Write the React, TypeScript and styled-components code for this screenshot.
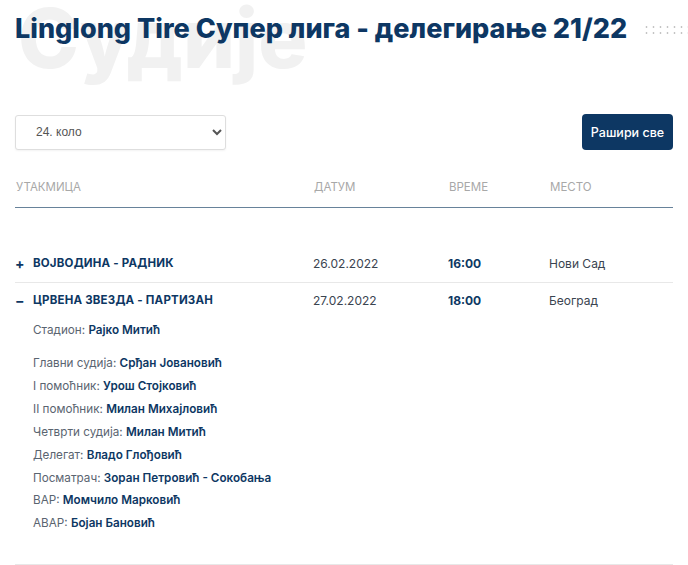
import React from 'react';
import styled, { createGlobalStyle } from 'styled-components';

const navy = '#0d3763';

const GlobalStyle = createGlobalStyle`
  body {
    margin: 0;
    background: #fff;
    font-family: Inter, 'Noto Sans', sans-serif;
  }
`;

type Match = {
  teams: string;
  date: string;
  time: string;
  place: string;
  open?: boolean;
  stadium?: string;
  officials?: [string, string][];
};

const matches: Match[] = [
  { teams: 'Војводина - Радник', date: '26.02.2022', time: '16:00', place: 'Нови Сад' },
  {
    teams: 'Црвена звезда - Партизан',
    date: '27.02.2022',
    time: '18:00',
    place: 'Београд',
    open: true,
    stadium: 'Рајко Митић',
    officials: [
      ['Главни судија', 'Срђан Јовановић'],
      ['I помоћник', 'Урош Стојковић'],
      ['II помоћник', 'Милан Михајловић'],
      ['Четврти судија', 'Милан Митић'],
      ['Делегат', 'Владо Глођовић'],
      ['Посматрач', 'Зоран Петровић - Сокобања'],
      ['ВАР', 'Момчило Марковић'],
      ['АВАР', 'Бојан Бановић'],
    ],
  },
];

const App: React.FC = () => {
  return (
    <Page>
      <GlobalStyle />
      <Header>
        <Watermark>Судије</Watermark>
        <Title>Linglong Tire Супер лига - делегирање 21/22</Title>
        <Dots />
      </Header>
      <Controls>
        <Select defaultValue="24">
          <option value="24">24. коло</option>
        </Select>
        <ExpandButton>Рашири све</ExpandButton>
      </Controls>
      <HeadRow>
        <HeadCell>Утакмица</HeadCell>
        <HeadCell>Датум</HeadCell>
        <HeadCell>Време</HeadCell>
        <HeadCell>Место</HeadCell>
      </HeadRow>
      <Body>
        {matches.map((m) => (
          <MatchBlock key={m.teams} $open={m.open}>
            <MatchRow>
              <Teams>
                <Toggle>{m.open ? '−' : '+'}</Toggle>
                {m.teams}
              </Teams>
              <Cell>{m.date}</Cell>
              <Time>{m.time}</Time>
              <Cell>{m.place}</Cell>
            </MatchRow>
            {m.open && (
              <Details>
                <Stadium>
                  Стадион: <b>{m.stadium}</b>
                </Stadium>
                {m.officials?.map(([role, name]) => (
                  <Official key={role}>
                    {role}: <b>{name}</b>
                  </Official>
                ))}
              </Details>
            )}
          </MatchBlock>
        ))}
      </Body>
    </Page>
  );
};

const Page = styled.div`
  width: 688px;
  padding: 0 15px;
  box-sizing: border-box;
  overflow: hidden;
`;

const Header = styled.div`
  position: relative;
  display: flex;
  align-items: center;
  height: 56px;
  margin-bottom: 58px;
`;

const Watermark = styled.div`
  position: absolute;
  left: 3px;
  top: -11px;
  font-size: 82px;
  font-weight: 800;
  color: #f1f1f1;
  white-space: nowrap;
  z-index: 0;
`;

const Title = styled.h1`
  position: relative;
  z-index: 1;
  margin: 0;
  font-size: 27px;
  font-weight: 800;
  color: ${navy};
  white-space: nowrap;
`;

const Dots = styled.span`
  position: relative;
  z-index: 1;
  flex: 1;
  height: 12px;
  margin: 4px -15px 0 16px;
  background-image: radial-gradient(circle, #c4c4c4 0.8px, transparent 1.2px);
  background-size: 7px 6px;
`;

const Controls = styled.div`
  display: flex;
  justify-content: space-between;
  align-items: center;
`;

const Select = styled.select`
  width: 211px;
  height: 35px;
  padding: 0 14px 0 16px;
  border: 1px solid #dedede;
  border-radius: 3px;
  background: #fff;
  box-shadow: 0 1px 2px rgba(0, 0, 0, 0.05);
  font-family: 'Liberation Sans', Arial, sans-serif;
  font-size: 12px;
  color: #555;
`;

const ExpandButton = styled.button`
  width: 91px;
  height: 36px;
  border: none;
  border-radius: 4px;
  background: ${navy};
  color: #fff;
  font-family: Inter, sans-serif;
  font-size: 12.5px;
  font-weight: 500;
`;

const grid = `
  display: grid;
  grid-template-columns: 298px 135px 101px 1fr;
  align-items: center;
`;

const HeadRow = styled.div`
  ${grid};
  padding: 30px 0 13px;
  line-height: 14px;
  border-bottom: 1.5px solid #67829a;
`;

const HeadCell = styled.div`
  font-size: 11.5px;
  color: #a8a8a8;
  text-transform: uppercase;
  padding-left: 1px;
`;

const Body = styled.div`
  padding-top: 38px;
`;

const MatchBlock = styled.div<{ $open?: boolean }>`
  border-bottom: 1px solid #e8e8e8;
  padding-bottom: ${(p) => (p.$open ? '29px' : '0')};
`;

const MatchRow = styled.div`
  ${grid};
  height: 36px;
  padding-bottom: 2px;
  box-sizing: border-box;
`;

const Teams = styled.div`
  display: flex;
  align-items: center;
  font-size: 11.5px;
  font-weight: 700;
  color: ${navy};
  text-transform: uppercase;
  letter-spacing: 0.2px;
`;

const Toggle = styled.span`
  width: 18px;
  font-size: 14px;
  font-weight: 700;
`;

const Cell = styled.div`
  font-size: 12px;
  color: #3a4450;
`;

const Time = styled(Cell)`
  font-weight: 700;
  color: ${navy};
`;

const Details = styled.div`
  padding-left: 18px;
  font-size: 11.7px;
  color: #5a6470;

  b {
    font-weight: 600;
    color: ${navy};
  }
`;

const Stadium = styled.div`
  line-height: 22px;
  margin-bottom: 11px;
`;

const Official = styled.div`
  line-height: 22.9px;
`;

export default App;
